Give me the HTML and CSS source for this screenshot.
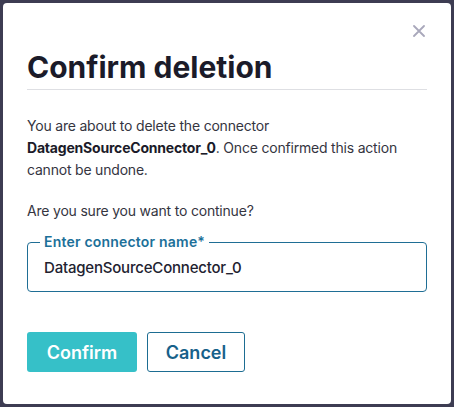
FILE: index.html
```html
<!DOCTYPE html>
<html>
<head>
<meta charset="utf-8">
<link rel="stylesheet" href="styles.css">
</head>
<body>
<div class="modal">
  <button class="close" aria-label="Close">
    <svg width="12" height="12" viewBox="0 0 12 12"><path d="M1 1L11 11M11 1L1 11" stroke="#a9a8bb" stroke-width="1.8" stroke-linecap="round"/></svg>
  </button>
  <h1 class="title">Confirm deletion</h1>
  <p class="text">You are about to delete the connector <strong>DatagenSourceConnector_0</strong>. Once confirmed this action cannot be undone.</p>
  <p class="text q">Are you sure you want to continue?</p>
  <fieldset class="field">
    <legend class="legend">Enter connector name*</legend>
    <div class="value">DatagenSourceConnector_0</div>
  </fieldset>
  <div class="actions">
    <button class="btn primary">Confirm</button>
    <button class="btn secondary">Cancel</button>
  </div>
</div>
</body>
</html>
```
FILE: styles.css
```css
html, body { margin: 0; padding: 0; }
body {
  background: #3d3c52;
  font-family: Inter, "Noto Sans", sans-serif;
  padding: 3px;
  height: 407px;
  box-sizing: border-box;
}
.modal {
  position: relative;
  background: #fff;
  border-radius: 4px;
  height: 401px;
  box-sizing: border-box;
  padding: 0 24px;
  display: flex;
  flex-direction: column;
}
.close {
  position: absolute;
  top: 22px;
  right: 26px;
  background: none;
  border: 0;
  padding: 0;
  width: 12px;
  height: 12px;
  display: flex;
}
.title {
  margin: 44px 0 0;
  font-size: 30px;
  font-weight: 700;
  line-height: 40px;
  color: #1b1b29;
  padding-bottom: 2px;
  border-bottom: 1px solid #dedfe3;
}
.text {
  margin: 25px 0 0;
  font-size: 14px;
  line-height: 22px;
  color: #35353f;
  letter-spacing: -0.2px;
}
.text strong { color: #1b1b29; font-weight: 700; }
.q { margin-top: 19px; }
.field {
  margin: 12px 0 0;
  border: 1px solid #1f6e95;
  border-radius: 4px;
  padding: 8px 16px 13px;
  min-width: 0;
}
.legend {
  padding: 0 4px;
  margin-left: -4px;
  color: #1c7099;
  font-size: 14px;
  font-weight: 600;
  line-height: 16px;
  letter-spacing: 0.2px;
}
.value {
  font-size: 15px;
  font-weight: 500;
  color: #222230;
  line-height: 20px;
  letter-spacing: -0.2px;
}
.actions {
  display: flex;
  gap: 10px;
  margin-top: 40px;
}
.btn {
  font-family: Inter, "Noto Sans", sans-serif;
  font-size: 18px;
  font-weight: 600;
  height: 40px;
  border-radius: 3px;
  box-sizing: border-box;
  cursor: pointer;
}
.primary {
  width: 110px;
  background: #36c0c8;
  border: 0;
  color: #fff;
}
.secondary {
  width: 98px;
  background: #fff;
  border: 1px solid #1d6d92;
  color: #17618a;
}
```
